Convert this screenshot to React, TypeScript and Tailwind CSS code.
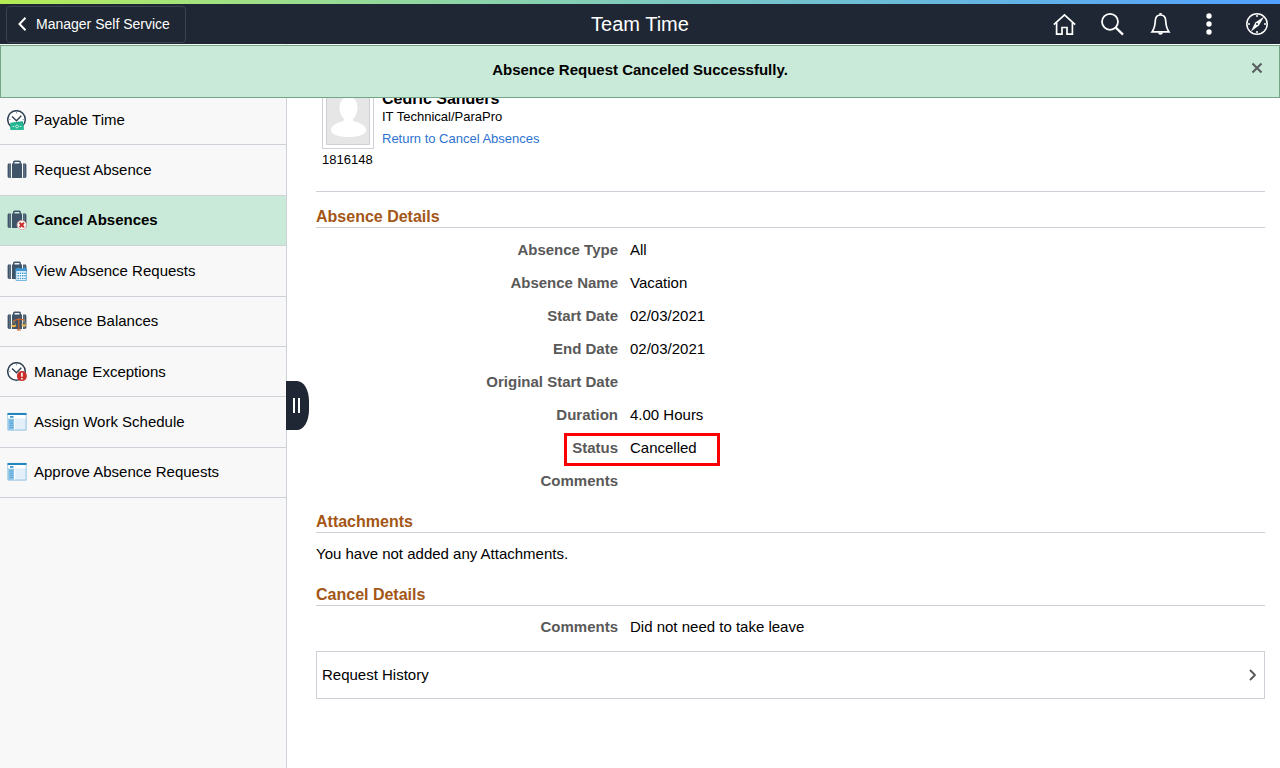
import React, { useState } from 'react';

type IconProps = { className?: string };

const HomeIcon: React.FC = () => (
  <svg width="24" height="24" viewBox="0 0 24 24" fill="none" stroke="#fff" strokeWidth="1.7">
    <path d="M1.8 12.6 12.5 2.8l10.700 9.800" />
    <path d="M4.6 10.5v11.700h5.400v-6.700h5v6.700h5.400V10.500" />
  </svg>
);

const SearchIcon: React.FC = () => (
  <svg width="24" height="24" viewBox="0 0 24 24" fill="none" stroke="#fff" strokeWidth="1.8">
    <circle cx="10" cy="9.8" r="8" />
    <path d="m15.8 15.6 7.2 7" strokeWidth="2.2" />
  </svg>
);

const BellIcon: React.FC = () => (
  <svg width="24" height="24" viewBox="0 0 24 24" fill="none" stroke="#fff" strokeWidth="1.7">
    <path d="M12.5 3c-3.200 0-5 2.200-5.200 5.500-.2 4.800-.9 8.100-3.300 11.400h17c-2.400-3.300-3.100-6.600-3.300-11.400C17.500 5.200 15.700 3 12.500 3z" />
    <path d="M10.800 2.500c.4-1.900 3-1.900 3.400 0zM10 20.500c.5 3 4.500 3 5 0z" fill="#fff" stroke="none" />
  </svg>
);

const DotsIcon: React.FC = () => (
  <svg width="24" height="24" viewBox="0 0 24 24" fill="#fff">
    <circle cx="13" cy="4" r="2.7" />
    <circle cx="13" cy="12" r="2.7" />
    <circle cx="13" cy="20" r="2.7" />
  </svg>
);

const CompassIcon: React.FC = () => (
  <svg width="24" height="24" viewBox="0 0 24 24" fill="none" stroke="#fff" strokeWidth="1.5">
    <circle cx="13" cy="12" r="10.2" />
    <path d="M20.2 4.600 14.900 13.600 6.900 19.600l4.400-9.200z" fill="#fff" stroke="none" />
    <circle cx="13" cy="12" r="1" fill="#1e2733" stroke="none" />
    <path d="M13 3v2M13 19v2M4 12h2M20 12h2" />
  </svg>
);

// 时钟底图
const Clock: React.FC = () => (
  <>
    <circle cx="9.5" cy="9.5" r="8.8" fill="#fff" stroke="#2f4154" strokeWidth="1.5" />
    <path d="m5 6.500 4.500 4.200 4.800-5" fill="none" stroke="#2f4154" strokeWidth="1.400" />
    <path d="M9.500 2v1.300M2.200 9.500h1.200M15.600 9.500h1.200" stroke="#8a96a3" strokeWidth="1" />
  </>
);

// 行李箱底图
const Suitcase: React.FC = () => (
  <>
    <path d="M6.8 4V2.200c0-.6.3-.9.9-.9h4.600c.6 0 .9.3.9.9V4" fill="none" stroke="#3f5468" strokeWidth="1.500" />
    <path d="M5 3.600h10V18H5zM2 3.600h1.900V18H2.300C1.200 18 .6 17.300.6 16.300V5.200c0-1 .5-1.600 1.400-1.600zM16.100 3.600h1.700c1 0 1.600.6 1.600 1.600v11.100c0 1-.6 1.700-1.600 1.700h-1.700z" fill="#3f5468" />
    <path d="M2.600 3.600V18M17.400 3.600V18" stroke="#8491a0" strokeWidth=".5" />
  </>
);

const iconProps = { width: 20, height: 20, viewBox: '0 0 20 20' };

const PayableIcon: React.FC = () => (
  <svg {...iconProps}>
    <Clock />
    <path d="m3.500 12.800 12.300-1.600 1 8.500H3.500z" fill="#1ba784" />
    <path d="M3.500 13.300h13v6.500h-13z" fill="#26b893" />
    <circle cx="10" cy="16.500" r="1.400" fill="none" stroke="#c9f3e6" strokeWidth=".9" />
    <path d="M5.600 16.500h1.600M12.800 16.500h1.600" stroke="#c9f3e6" strokeWidth="1" />
  </svg>
);

const SuitcaseIcon: React.FC = () => (
  <svg {...iconProps}>
    <Suitcase />
  </svg>
);

const CancelIcon: React.FC = () => (
  <svg {...iconProps}>
    <Suitcase />
    <circle cx="14.700" cy="15" r="4.600" fill="#fff" stroke="#d9a19b" strokeWidth=".8" />
    <path d="m12.500 12.800 4.400 4.400m0-4.400-4.400 4.400" stroke="#c9302c" strokeWidth="2" />
  </svg>
);

const CalendarIcon: React.FC = () => (
  <svg {...iconProps}>
    <Suitcase />
    <path d="M9 8h10.600v11.500H9z" fill="#fff" stroke="#5aa9da" strokeWidth=".8" />
    <path d="M8.600 7.500H20v2.700H8.600z" fill="#3d98d3" />
    <path d="M11.300 6.300v2M17.700 6.300v2" stroke="#3d98d3" strokeWidth="1" />
    <path d="M10.400 12.200h8.400M10.400 14.800h8.400M10.400 17.400h8.400" stroke="#3d98d3" strokeWidth="1.500" strokeDasharray="1.500 .8" />
  </svg>
);

const BalanceIcon: React.FC = () => (
  <svg {...iconProps}>
    <Suitcase />
    <path d="M11.800 7v11.500M6.500 9.600c2.500 0 3-1.500 5.300-1.500s2.800.8 5.500.3M9.800 19h4" fill="none" stroke="#c8622c" strokeWidth="1.200" />
    <path d="m6.700 9.600-1.800 4.400m1.800-4.400L8.700 14M17 8.500l-2 5m2-5 2 5" fill="none" stroke="#b99a5c" strokeWidth=".6" />
    <path d="M4.200 14h5.200c-.3 2.900-4.900 2.900-5.200 0zM14.400 13.500h5.200c-.3 2.900-4.900 2.900-5.200 0z" fill="#eab543" />
  </svg>
);

const ExceptionIcon: React.FC = () => (
  <svg {...iconProps}>
    <Clock />
    <circle cx="14.900" cy="14.100" r="5" fill="#c9302c" />
    <path d="M14.900 10.800v4M14.900 15.900v1.600" stroke="#fff" strokeWidth="1.600" />
  </svg>
);

const PageIcon: React.FC = () => (
  <svg {...iconProps}>
    <path d="M.9 1.400h18.200v16.700H.9z" fill="#e3f0fa" stroke="#85bbdf" strokeWidth=".9" />
    <path d="M.5 1h19v2H.5z" fill="#2484bf" />
    <path d="M1.300 3h17.400v3.400H1.300z" fill="#fff" />
    <path d="M3 4.900h3.500" stroke="#2484bf" strokeWidth="1.500" />
    <path d="M1.300 6.800h5.700v10.900H1.300z" fill="#8cc3e6" />
    <path d="M2.500 9h3.500M2.500 11.200h3.500M2.500 13.400h3.500M2.500 15.600h3.500" stroke="#4a9ed3" strokeWidth=".8" />
    <path d="M7.600 6.800v11" stroke="#fff" strokeWidth=".9" />
  </svg>
);

const PersonPhoto: React.FC<IconProps> = ({ className }) => (
  <svg className={className} viewBox="0 0 44 56" role="img" aria-label="Employee photo">
    <path d="M.5.500h43v55H.5z" fill="#e6e6e6" stroke="#d0d0d0" />
    <path d="M22.500 8c5.500 0 9 4.300 9 10.500 0 4.800-1.800 9-4.300 11.200-.6 1.400.3 2.300 1.600 2.800C34.500 34 40 36.500 40 41.200c0 4.300-8 6.800-17.500 6.800S5 45.500 5 41.200c0-4.700 5.500-7.200 11.200-8.700 1.300-.5 2.200-1.400 1.600-2.800-2.500-2.200-4.300-6.400-4.300-11.200C13.500 12.300 17 8 22.500 8z" fill="#fff" />
  </svg>
);

const menuItems = [
  { name: 'Payable Time', icon: PayableIcon },
  { name: 'Request Absence', icon: SuitcaseIcon },
  { name: 'Cancel Absences', icon: CancelIcon },
  { name: 'View Absence Requests', icon: CalendarIcon },
  { name: 'Absence Balances', icon: BalanceIcon },
  { name: 'Manage Exceptions', icon: ExceptionIcon },
  { name: 'Assign Work Schedule', icon: PageIcon },
  { name: 'Approve Absence Requests', icon: PageIcon },
];

const toolbar = [
  { name: 'Home', icon: HomeIcon },
  { name: 'Search', icon: SearchIcon },
  { name: 'Notifications', icon: BellIcon },
  { name: 'Actions', icon: DotsIcon },
  { name: 'NavBar', icon: CompassIcon },
];

const details = [
  { label: 'Absence Type', value: 'All' },
  { label: 'Absence Name', value: 'Vacation' },
  { label: 'Start Date', value: '02/03/2021' },
  { label: 'End Date', value: '02/03/2021' },
  { label: 'Original Start Date', value: '' },
  { label: 'Duration', value: '4.00 Hours' },
  { label: 'Status', value: 'Cancelled', highlight: true },
  { label: 'Comments', value: '' },
];

const SectionTitle: React.FC<{ children: React.ReactNode }> = ({ children }) => (
  <h2 className="h-6 border-b border-[#cdd1d8] text-[16px] leading-[26px] font-bold text-[#a35616]">{children}</h2>
);

const Field: React.FC<{ label: string; value: string; highlight?: boolean }> = ({ label, value, highlight }) => (
  <div className="relative flex h-[33px] items-center gap-3">
    <dt className="w-[302px] shrink-0 text-right font-bold text-[#595959]">{label}</dt>
    <dd>{value}</dd>
    {highlight && <span className="absolute top-[2px] left-[248px] h-[33px] w-[156px] border-3 border-[#fa0000]" />}
  </div>
);

const App: React.FC = () => {
  const [selected, setSelected] = useState('Cancel Absences');
  const [showMessage, setShowMessage] = useState(true);
  const [collapsed, setCollapsed] = useState(false);

  return (
    <div className="flex min-h-screen flex-col bg-white font-['Liberation_Sans',Arial,sans-serif] text-[15px] leading-5 text-black">
      <div className="h-1 bg-linear-to-r from-[#b4ec51] to-[#529fff]" />
      <header className="flex h-10 items-center bg-[#1e2733] text-white">
        <div className="flex flex-1">
          <button className="ml-[6px] flex h-[37px] items-center gap-[10px] rounded-sm border border-[#3a4450] pr-[15px] pl-[11px] text-[14px]">
            <svg width="8" height="14" viewBox="0 0 8 14" fill="none" stroke="#fff" strokeWidth="2">
              <path d="M7.500.700 1.500 7l6 6.300" />
            </svg>
            Manager Self Service
          </button>
        </div>
        <h1 className="text-[20px]">Team Time</h1>
        <div className="flex flex-1 justify-end">
          {toolbar.map(({ name, icon: Icon }) => (
            <button key={name} aria-label={name} className="flex h-10 w-12 items-center justify-center">
              <Icon />
            </button>
          ))}
        </div>
      </header>

      <div className="relative flex flex-1">
        {/* 提示消息浮在内容上方 */}
        {showMessage && (
          <div role="status" className="absolute inset-x-0 top-px z-10 flex h-[53px] justify-center border border-[#72a686] bg-[#c9ead8] pt-[14px] font-bold">
            Absence Request Canceled Successfully.
            <button aria-label="Close" onClick={() => setShowMessage(false)} className="absolute top-[15px] right-[15px] p-px">
              <svg width="12" height="12" viewBox="0 0 12 12" stroke="#5a5f62" strokeWidth="2.200">
                <path d="m1.500 1.500 9 9m0-9-9 9" />
              </svg>
            </button>
          </div>
        )}

        {!collapsed && (
          <nav className="w-[287px] shrink-0 border-r border-[#cdd1d8] bg-[#f8f8f8] pt-[51px]">
            <ul className="grid h-[403px] grid-rows-8">
              {menuItems.map(({ name, icon: Icon }) => (
                <li key={name} className={name === selected ? 'border-b border-[#cdd1d8] bg-[#c9ead8] font-bold' : 'border-b border-[#cdd1d8]'}>
                  <a
                    href="#"
                    onClick={(e) => {
                      e.preventDefault();
                      setSelected(name);
                    }}
                    className="flex h-full items-center gap-[7px] pl-[7px]"
                  >
                    <Icon />
                    {name}
                  </a>
                </li>
              ))}
            </ul>
          </nav>
        )}

        <main className="relative min-w-0 flex-1 pr-[15px] pl-[29px]">
          <button
            aria-label="Toggle menu"
            onClick={() => setCollapsed(!collapsed)}
            className="absolute top-[337px] -left-px flex h-[49px] w-[23px] items-center gap-[3px] rounded-r-[12px_20px] bg-[#1e2733] pl-[7px]"
          >
            <span className="h-[15px] w-[2px] bg-white" />
            <span className="h-[15px] w-[2px] bg-white" />
          </button>

          <div className="flex h-[148px] gap-2 border-b border-[#cdd1d8] pt-[41px] pl-[6px] text-[13px] leading-[21px]">
            <div>
              <div className="w-[52px] border border-[#cdd1d8] p-[3px]">
                <PersonPhoto className="block h-[56px] w-full" />
              </div>
              <div>1816148</div>
            </div>
            <div className="pt-[3px]">
              <div className="text-[16px] leading-[22px] font-bold">Cedric Sanders</div>
              <div className="leading-[14px]">IT Technical/ParaPro</div>
              <a href="#" className="block pt-[4px] text-[#2d73cf]">Return to Cancel Absences</a>
            </div>
          </div>

          <section className="pt-3">
            <SectionTitle>Absence Details</SectionTitle>
            <dl className="pt-[5px]">
              {details.map((item) => (
                <Field key={item.label} {...item} />
              ))}
            </dl>
          </section>

          <section className="pt-3">
            <SectionTitle>Attachments</SectionTitle>
            <p className="pt-[11px]">You have not added any Attachments.</p>
          </section>

          <section className="pt-[18px]">
            <SectionTitle>Cancel Details</SectionTitle>
            <dl className="pt-1">
              <Field label="Comments" value="Did not need to take leave" />
            </dl>
          </section>

          <button className="mt-2 flex h-12 w-full items-center justify-between border border-[#cdd1d8] pr-2 pl-[5px]">
            Request History
            <svg width="7" height="12" viewBox="0 0 7 12" fill="none" stroke="#555" strokeWidth="1.800">
              <path d="m1 1 5 5-5 5" />
            </svg>
          </button>
        </main>
      </div>
    </div>
  );
};

export default App;
